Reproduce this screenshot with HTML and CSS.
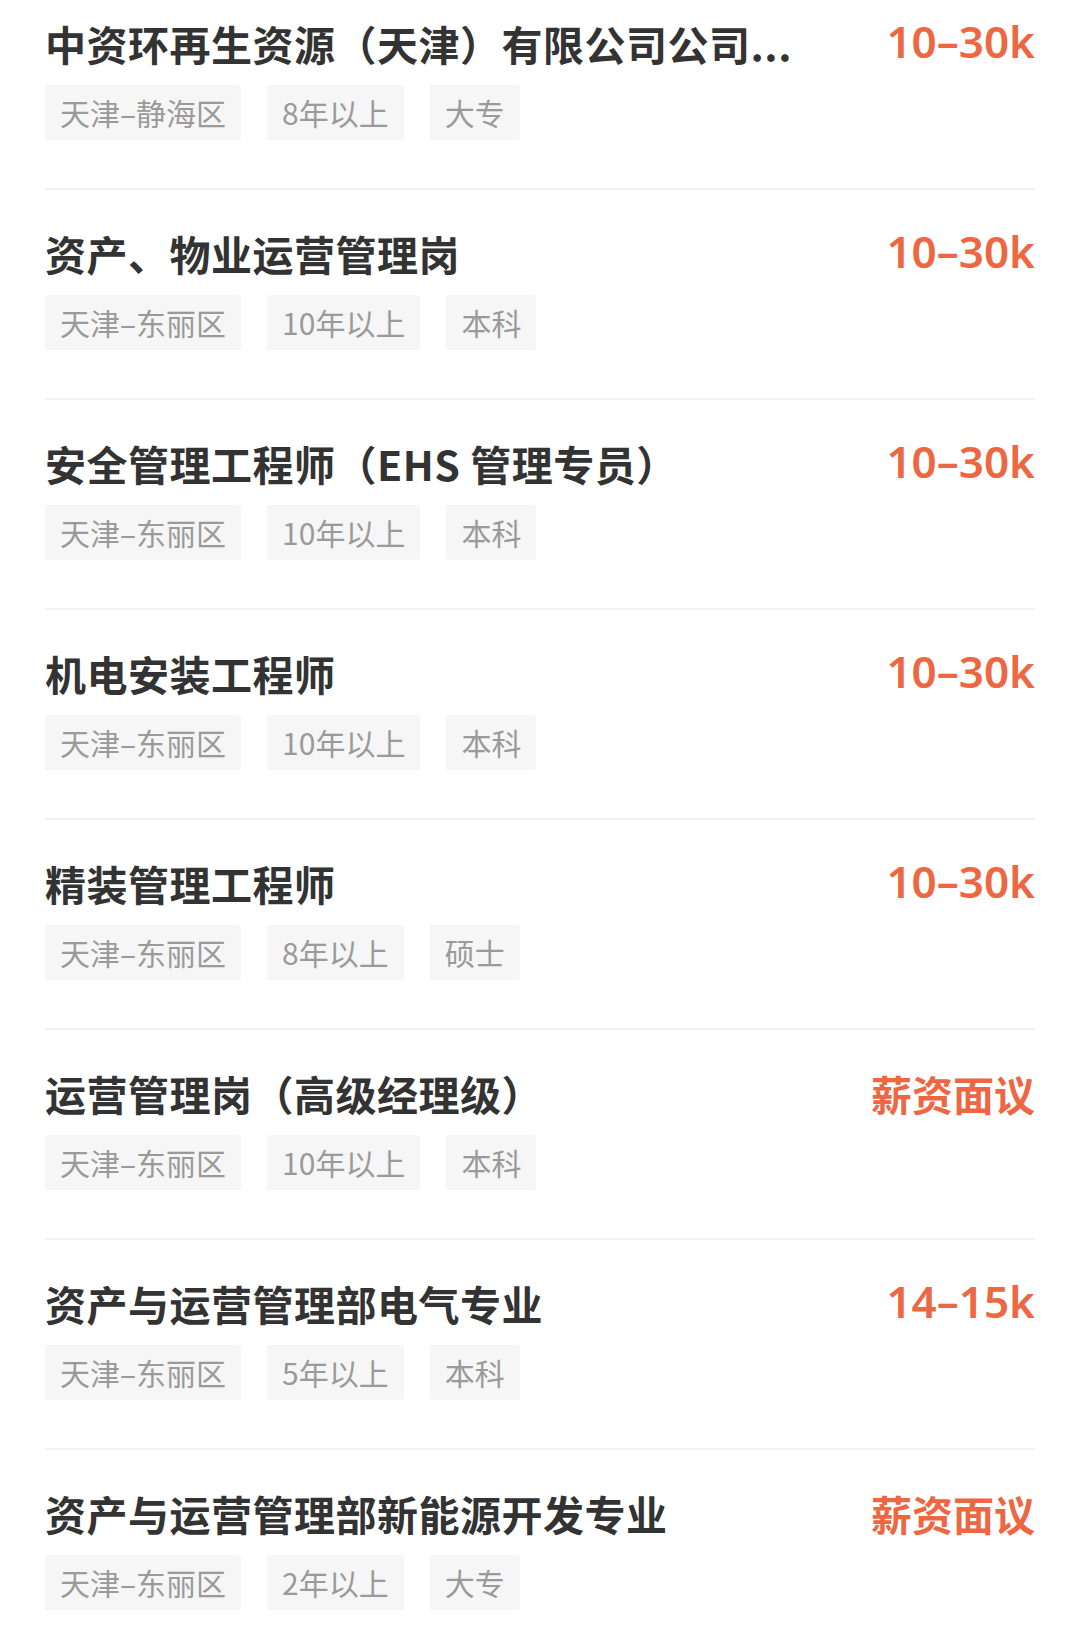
FILE: index.html
```html
<!DOCTYPE html>
<html lang="zh-CN">
<head>
    <meta charset="UTF-8">
    <title>职位列表</title>
    <link rel="stylesheet" href="styles.css">
</head>
<body>
    <div id="jobList">
        <div class="job">
            <div class="job-head">
                <span class="job-title">中资环再生资源（天津）有限公司公司...</span>
                <span class="salary">10–30k</span>
            </div>
            <div class="tags">
                <span class="tag">天津–静海区</span>
                <span class="tag">8年以上</span>
                <span class="tag">大专</span>
            </div>
        </div>

        <div class="job">
            <div class="job-head">
                <span class="job-title">资产、物业运营管理岗</span>
                <span class="salary">10–30k</span>
            </div>
            <div class="tags">
                <span class="tag">天津–东丽区</span>
                <span class="tag">10年以上</span>
                <span class="tag">本科</span>
            </div>
        </div>

        <div class="job">
            <div class="job-head">
                <span class="job-title">安全管理工程师（EHS 管理专员）</span>
                <span class="salary">10–30k</span>
            </div>
            <div class="tags">
                <span class="tag">天津–东丽区</span>
                <span class="tag">10年以上</span>
                <span class="tag">本科</span>
            </div>
        </div>

        <div class="job">
            <div class="job-head">
                <span class="job-title">机电安装工程师</span>
                <span class="salary">10–30k</span>
            </div>
            <div class="tags">
                <span class="tag">天津–东丽区</span>
                <span class="tag">10年以上</span>
                <span class="tag">本科</span>
            </div>
        </div>

        <div class="job">
            <div class="job-head">
                <span class="job-title">精装管理工程师</span>
                <span class="salary">10–30k</span>
            </div>
            <div class="tags">
                <span class="tag">天津–东丽区</span>
                <span class="tag">8年以上</span>
                <span class="tag">硕士</span>
            </div>
        </div>

        <div class="job">
            <div class="job-head">
                <span class="job-title">运营管理岗（高级经理级）</span>
                <span class="salary salary-text">薪资面议</span>
            </div>
            <div class="tags">
                <span class="tag">天津–东丽区</span>
                <span class="tag">10年以上</span>
                <span class="tag">本科</span>
            </div>
        </div>

        <div class="job">
            <div class="job-head">
                <span class="job-title">资产与运营管理部电气专业</span>
                <span class="salary">14–15k</span>
            </div>
            <div class="tags">
                <span class="tag">天津–东丽区</span>
                <span class="tag">5年以上</span>
                <span class="tag">本科</span>
            </div>
        </div>

        <div class="job">
            <div class="job-head">
                <span class="job-title">资产与运营管理部新能源开发专业</span>
                <span class="salary salary-text">薪资面议</span>
            </div>
            <div class="tags">
                <span class="tag">天津–东丽区</span>
                <span class="tag">2年以上</span>
                <span class="tag">大专</span>
            </div>
        </div>
    </div>
</body>
</html>
```

FILE: styles.css
```css
body {
    margin: 0;
    background: #fff;
    font-family: "Noto Sans CJK SC", "Noto Sans", sans-serif;
    overflow: hidden;
}

#jobList {
    padding: 0 45px;
}

.job {
    padding: 35px 0 48px;
    border-bottom: 2px solid #f1f1f1;
}

.job:first-child {
    padding-top: 15px;
}

.job-head {
    display: flex;
    justify-content: space-between;
    align-items: center;
    height: 56px;
}

.job-title {
    font-size: 41px;
    font-weight: 700;
    color: #333;
    line-height: 56px;
    letter-spacing: 0.5px;
    white-space: nowrap;
}

.salary {
    font-family: "Noto Sans", "Noto Sans CJK SC", sans-serif;
    font-size: 44px;
    font-weight: 600;
    color: #ec6742;
    line-height: 56px;
    margin-top: -4px;
}

.salary-text {
    font-family: "Noto Sans CJK SC", sans-serif;
    font-size: 41px;
    margin-top: 0;
}

.tags {
    display: flex;
    gap: 26px;
    margin-top: 14px;
}

.tag {
    background: #f6f6f6;
    color: #9a9a9a;
    font-size: 30px;
    line-height: 55px;
    padding: 0 15px;
    border-radius: 2px;
}
```
